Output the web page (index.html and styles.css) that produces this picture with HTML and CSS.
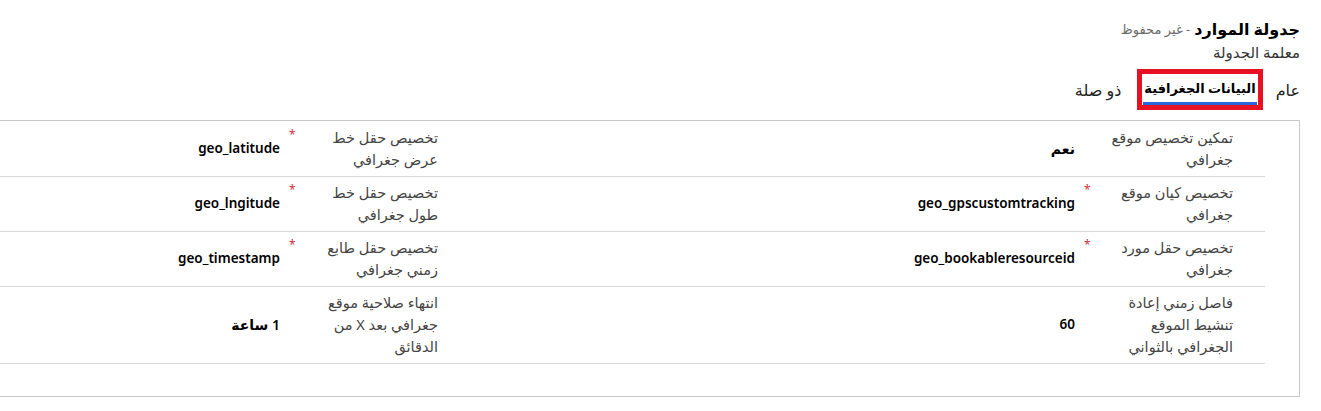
FILE: index.html
```html
<!DOCTYPE html>
<html lang="ar" dir="rtl">
<head>
<meta charset="utf-8">
<title>جدولة الموارد</title>
<link rel="stylesheet" href="styles.css">
</head>
<body>
<div class="page">
  <header class="header">
    <div class="title-line"><span class="title">جدولة الموارد</span><span class="status"> - غير محفوظ</span></div>
    <div class="subtitle">معلمة الجدولة</div>
  </header>
  <nav class="tabs">
    <span class="tab">عام</span>
    <span class="tab tab-active"><span class="tab-label">البيانات الجغرافية</span></span>
    <span class="tab tab-last">ذو صلة</span>
  </nav>
  <section class="box">
    <div class="grid">
      <div class="field">
        <div class="label"><span class="label-text">تمكين تخصيص موقع<br>جغرافي</span></div>
        <div class="value value-ar">نعم</div>
      </div>
      <div class="field">
        <div class="label"><span class="label-text">تخصيص حقل خط<br>عرض جغرافي</span><span class="req">*</span></div>
        <div class="value">geo_latitude</div>
      </div>
      <div class="field">
        <div class="label"><span class="label-text">تخصيص كيان موقع<br>جغرافي</span><span class="req">*</span></div>
        <div class="value">geo_gpscustomtracking</div>
      </div>
      <div class="field">
        <div class="label"><span class="label-text">تخصيص حقل خط<br>طول جغرافي</span><span class="req">*</span></div>
        <div class="value">geo_lngitude</div>
      </div>
      <div class="field">
        <div class="label"><span class="label-text">تخصيص حقل مورد<br>جغرافي</span><span class="req">*</span></div>
        <div class="value">geo_bookableresourceid</div>
      </div>
      <div class="field">
        <div class="label"><span class="label-text">تخصيص حقل طابع<br>زمني جغرافي</span><span class="req">*</span></div>
        <div class="value">geo_timestamp</div>
      </div>
      <div class="field">
        <div class="label"><span class="label-text">فاصل زمني إعادة<br>تنشيط الموقع<br>الجغرافي بالثواني</span></div>
        <div class="value">60</div>
      </div>
      <div class="field">
        <div class="label"><span class="label-text">انتهاء صلاحية موقع<br>جغرافي بعد X من<br>الدقائق</span></div>
        <div class="value value-ar">1 ساعة</div>
      </div>
    </div>
  </section>
</div>
</body>
</html>
```

FILE: styles.css
```css
html, body {
  margin: 0;
  padding: 0;
  background: #ffffff;
}

body {
  font-family: "Segoe UI", "Noto Sans", "DejaVu Sans", sans-serif;
  color: #333333;
  direction: rtl;
}

.page {
  padding: 15px 21px 0 0;
  overflow: hidden;
  height: 411px;
  box-sizing: border-box;
}

.header {
  line-height: 1;
}

.title-line {
  height: 28px;
  display: flex;
  align-items: center;
}

.title {
  font-size: 16px;
  font-weight: 700;
  color: #000000;
}

.status {
  font-size: 13px;
  color: #6b6b6b;
  margin-right: 4px;
}

.subtitle {
  font-size: 15px;
  color: #333333;
  height: 18px;
  line-height: 18px;
}

.tabs {
  display: flex;
  align-items: center;
  margin-top: 8px;
  height: 41px;
}

.tab {
  font-size: 16px;
  color: #222222;
  line-height: 28px;
}

.tab-active {
  border: 5px solid #e81123;
  padding: 0 1px;
  margin: 0 13px 0 16px;
  display: flex;
}

.tab-label {
  font-size: 13px;
  font-weight: 700;
  color: #000000;
  line-height: 28px;
  border-bottom: 3px solid #2b66d9;
  padding: 0 1px;
}

.box {
  margin-top: 10px;
  width: 1626px;
  border: 1px solid #c8c8c8;
  padding: 1px 34px 32px 0;
  box-sizing: border-box;
}

.grid {
  display: grid;
  grid-template-columns: 795px 795px;
}

.field {
  display: grid;
  grid-template-columns: 158px 1fr;
  padding: 4px 32px 6px 0;
  border-bottom: 1px solid #d9d9d9;
}

.label {
  display: flex;
  align-items: flex-start;
  padding-left: 9px;
}

.label-text {
  font-size: 14.5px;
  line-height: 22px;
  color: #444444;
}

.req {
  margin-right: auto;
  color: #d13438;
  font-size: 12px;
  line-height: 18px;
}

.value {
  align-self: center;
  font-size: 13.5px;
  font-weight: 600;
  color: #000000;
  direction: ltr;
  text-align: right;
}

.value-ar {
  direction: rtl;
  font-size: 14px;
}
```
